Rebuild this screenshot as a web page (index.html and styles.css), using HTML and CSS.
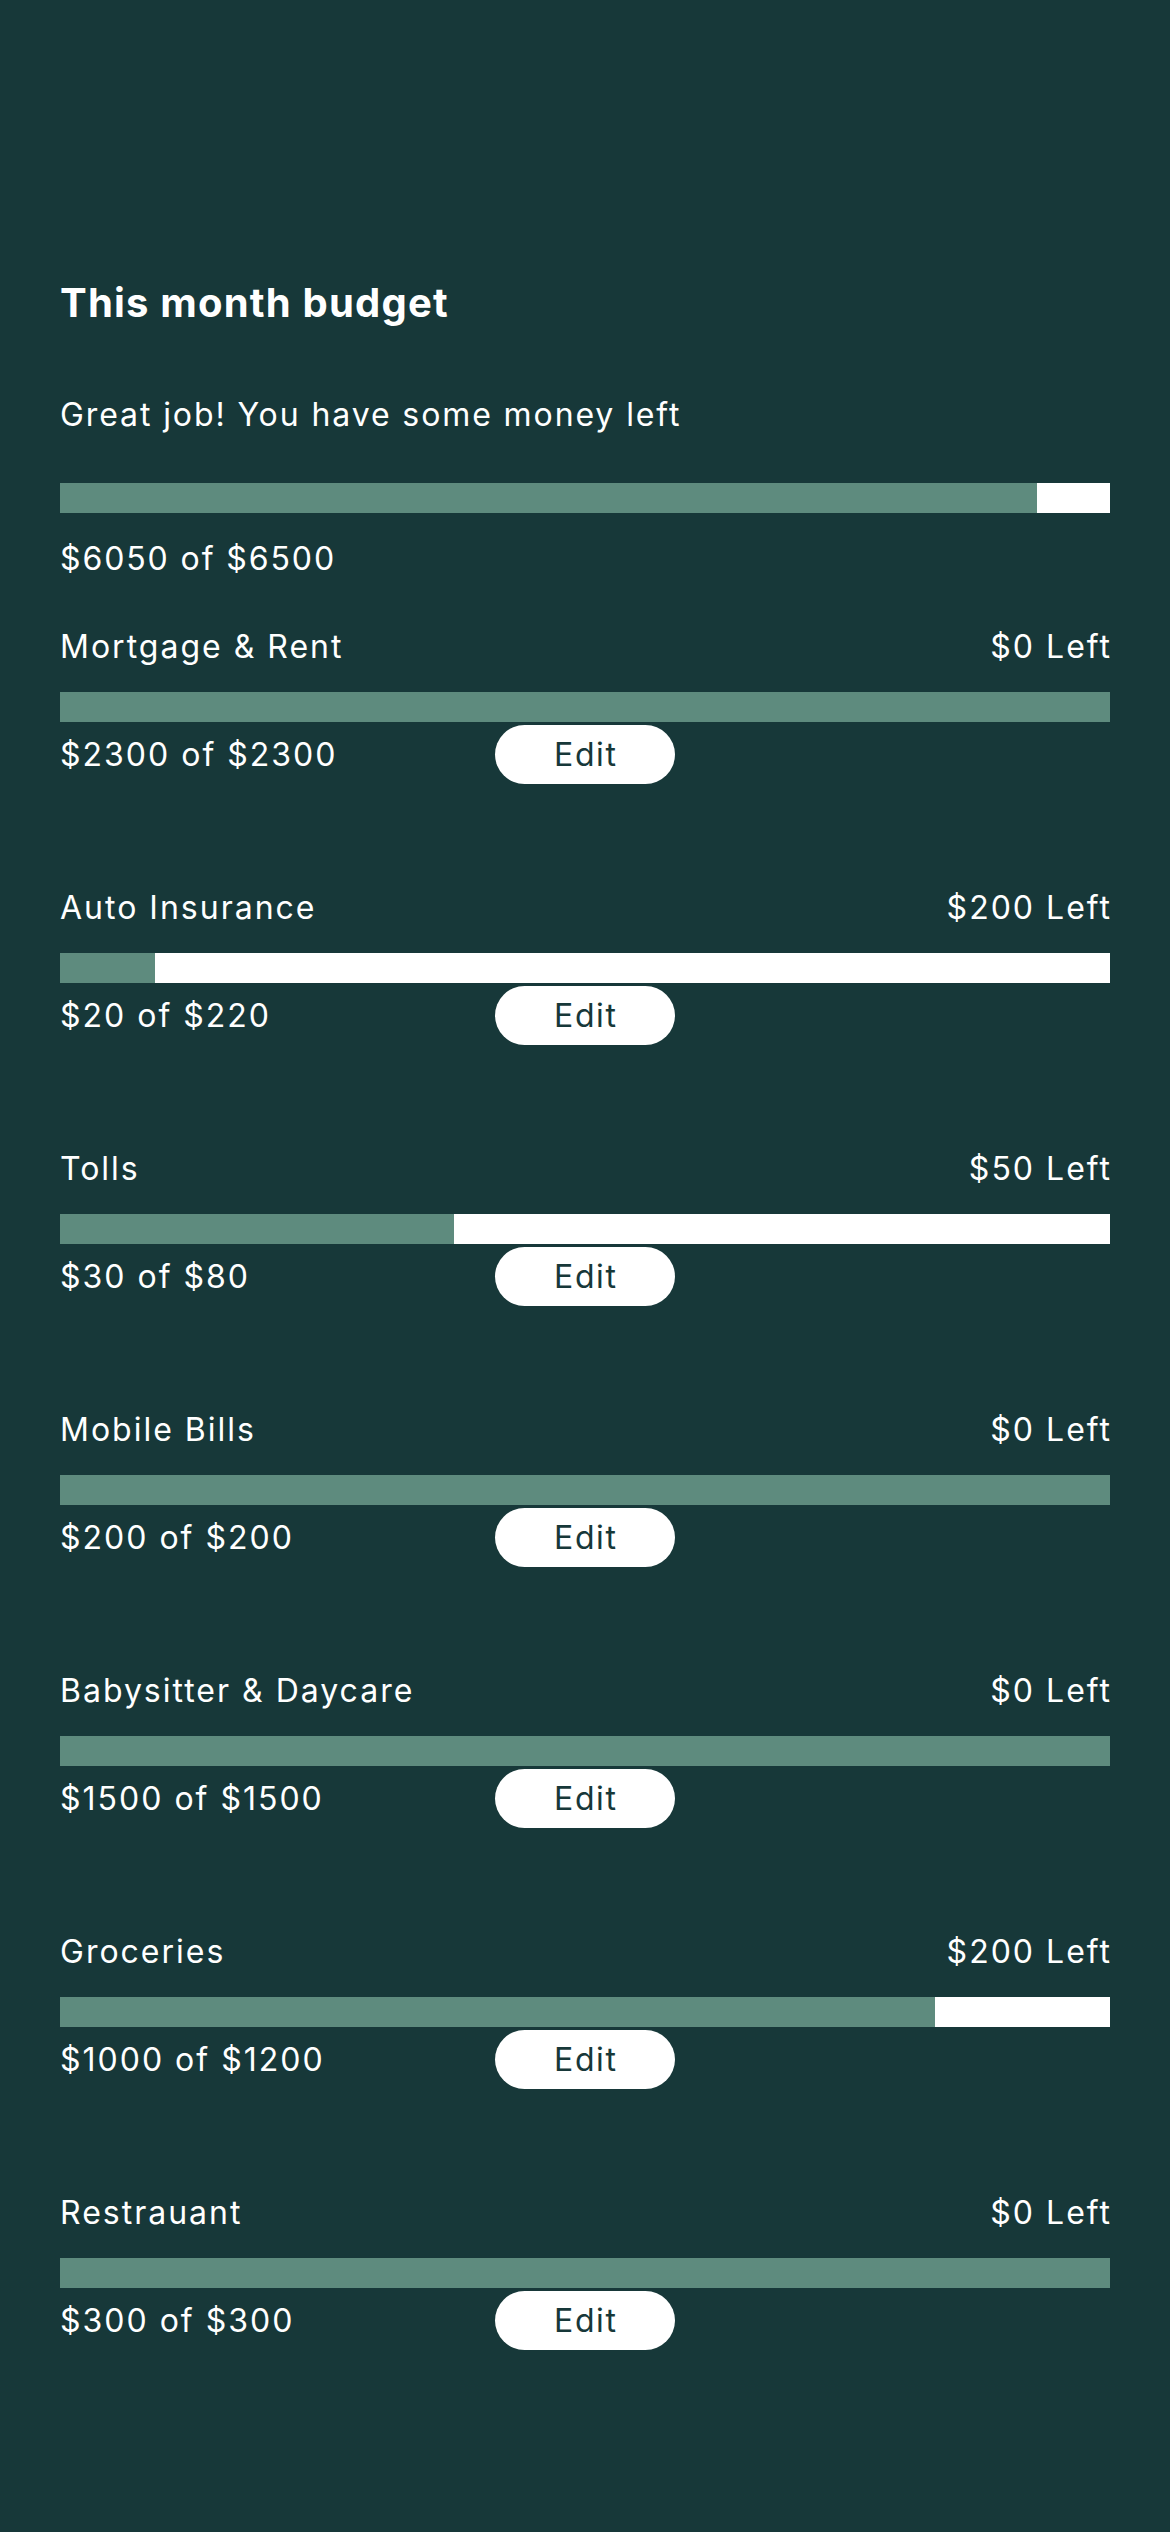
FILE: index.html
```html
<!DOCTYPE html>
<html lang="en">
<head>
<meta charset="utf-8">
<title>This month budget</title>
<link rel="stylesheet" href="styles.css">
</head>
<body>
<main class="page">
  <h1 class="title">This month budget</h1>
  <p class="summary-msg">Great job! You have some money left</p>
  <div class="bar total-bar"><div class="fill" style="width:93.08%"></div></div>
  <p class="summary-amount">$6050 of $6500</p>

  <section class="cat">
    <div class="cat-head"><span>Mortgage &amp; Rent</span><span class="left">$0 Left</span></div>
    <div class="bar"><div class="fill" style="width:100%"></div></div>
    <div class="cat-foot"><span class="amount">$2300 of $2300</span><button class="edit">Edit</button></div>
  </section>

  <section class="cat">
    <div class="cat-head"><span>Auto Insurance</span><span class="left">$200 Left</span></div>
    <div class="bar"><div class="fill" style="width:9.09%"></div></div>
    <div class="cat-foot"><span class="amount">$20 of $220</span><button class="edit">Edit</button></div>
  </section>

  <section class="cat">
    <div class="cat-head"><span>Tolls</span><span class="left">$50 Left</span></div>
    <div class="bar"><div class="fill" style="width:37.5%"></div></div>
    <div class="cat-foot"><span class="amount">$30 of $80</span><button class="edit">Edit</button></div>
  </section>

  <section class="cat">
    <div class="cat-head"><span>Mobile Bills</span><span class="left">$0 Left</span></div>
    <div class="bar"><div class="fill" style="width:100%"></div></div>
    <div class="cat-foot"><span class="amount">$200 of $200</span><button class="edit">Edit</button></div>
  </section>

  <section class="cat">
    <div class="cat-head"><span>Babysitter &amp; Daycare</span><span class="left">$0 Left</span></div>
    <div class="bar"><div class="fill" style="width:100%"></div></div>
    <div class="cat-foot"><span class="amount">$1500 of $1500</span><button class="edit">Edit</button></div>
  </section>

  <section class="cat">
    <div class="cat-head"><span>Groceries</span><span class="left">$200 Left</span></div>
    <div class="bar"><div class="fill" style="width:83.33%"></div></div>
    <div class="cat-foot"><span class="amount">$1000 of $1200</span><button class="edit">Edit</button></div>
  </section>

  <section class="cat">
    <div class="cat-head"><span>Restrauant</span><span class="left">$0 Left</span></div>
    <div class="bar"><div class="fill" style="width:100%"></div></div>
    <div class="cat-foot"><span class="amount">$300 of $300</span><button class="edit">Edit</button></div>
  </section>
</main>
</body>
</html>
```
FILE: styles.css
```css
html, body {
  margin: 0;
  padding: 0;
  background: #173839;
}
body {
  font-family: Inter, "Noto Sans", "Liberation Sans", sans-serif;
  color: #ffffff;
  min-height: 2532px;
}
.page {
  padding: 279px 60px 0 60px;
  box-sizing: border-box;
}
.title {
  margin: 0;
  font-size: 40px;
  line-height: 48px;
  font-weight: 700;
  letter-spacing: 1.2px;
}
.summary-msg,
.summary-amount {
  margin: 0;
  font-size: 32px;
  line-height: 40px;
  font-weight: 400;
  letter-spacing: 1.9px;
}
.summary-msg {
  margin-top: 68px;
}
.bar {
  height: 30px;
  background: #ffffff;
  display: flex;
}
.fill {
  height: 100%;
  background: #5e8b7e;
}
.total-bar {
  margin-top: 48px;
}
.summary-amount {
  margin-top: 26px;
}
.cat {
  margin-top: 48px;
}
.cat + .cat {
  margin-top: 104px;
}
.cat-head {
  display: flex;
  justify-content: space-between;
  font-size: 32px;
  line-height: 40px;
  letter-spacing: 2px;
}
.left {
  margin-right: -2px;
}
.cat .bar {
  margin-top: 25px;
}
.cat-foot {
  margin-top: 3px;
  display: flex;
  align-items: center;
  font-size: 32px;
  line-height: 40px;
  letter-spacing: 2px;
}
.amount {
  width: 435px;
}
.edit {
  width: 180px;
  height: 59px;
  border: none;
  border-radius: 30px;
  background: #ffffff;
  color: #173839;
  font-family: Inter, "Noto Sans", "Liberation Sans", sans-serif;
  font-size: 32px;
  line-height: 40px;
  letter-spacing: 1.6px;
  padding: 0 0 0 1.6px;
}
```
